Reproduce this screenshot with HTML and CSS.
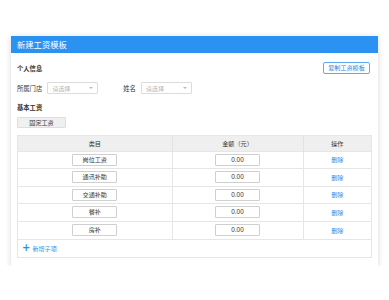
FILE: index.html
```html
<!DOCTYPE html>
<html lang="zh-CN">
<head>
<meta charset="utf-8">
<title>新建工资模板</title>
<link rel="stylesheet" href="styles.css">
</head>
<body>
<div class="card">
  <div class="card-head">新建工资模板</div>
  <div class="card-body">
    <div class="sec-row">
      <span class="sec-title">个人信息</span>
      <button class="btn-outline">复制工资模板</button>
    </div>
    <div class="form-row">
      <span class="label">所属门店</span>
      <div class="select"><span>请选择</span><i class="caret"></i></div>
      <span class="label label-gap">姓名</span>
      <div class="select"><span>请选择</span><i class="caret"></i></div>
    </div>
    <div class="sec-row sec-row2">
      <span class="sec-title">基本工资</span>
    </div>
    <button class="btn-grey">固定工资</button>
    <div class="table-wrap">
      <table class="grid">
        <colgroup><col class="c1"><col class="c2"><col class="c3"></colgroup>
        <thead>
          <tr><th>类目</th><th>金额（元）</th><th>操作</th></tr>
        </thead>
        <tbody>
          <tr><td><div class="box">岗位工资</div></td><td><div class="box num">0.00</div></td><td><a class="link">删除</a></td></tr>
          <tr><td><div class="box">通讯补助</div></td><td><div class="box num">0.00</div></td><td><a class="link">删除</a></td></tr>
          <tr><td><div class="box">交通补助</div></td><td><div class="box num">0.00</div></td><td><a class="link">删除</a></td></tr>
          <tr><td><div class="box">餐补</div></td><td><div class="box num">0.00</div></td><td><a class="link">删除</a></td></tr>
          <tr><td><div class="box">房补</div></td><td><div class="box num">0.00</div></td><td><a class="link">删除</a></td></tr>
        </tbody>
      </table>
      <div class="add-row"><span class="plus">+</span>新增子项</div>
    </div>
  </div>
</div>
</body>
</html>
```
FILE: styles.css
```css
* { box-sizing: border-box; }
html, body { margin: 0; padding: 0; background: #fff; }
body {
  font-family: "Noto Sans CJK SC", "Noto Sans", sans-serif;
  color: #333;
  font-size: 6.3px;
}
.card {
  margin: 36px 0 0 11px;
  width: 367px;
  background: #fff;
  box-shadow: 0 1px 6px rgba(0,0,0,0.16);
  padding-bottom: 8px;
}
.card-head {
  height: 17px;
  background: #2b92f2;
  color: #fff;
  font-size: 8.3px;
  line-height: 17px;
  padding-left: 6px;
}
.card-body { padding: 0 6px; }
.sec-row {
  display: flex;
  justify-content: space-between;
  align-items: center;
  height: 12px;
  margin-top: 9px;
  padding-right: 2px;
}
.sec-row2 { margin-top: 7px; }
.sec-title { font-weight: bold; color: #333; font-size: 6.3px; }
button { font-family: inherit; padding: 0; cursor: pointer; }
.btn-outline {
  width: 47px;
  height: 12px;
  border: 1px solid #5eaaf0;
  border-radius: 2px;
  background: #fff;
  color: #2b86d9;
  font-size: 6.1px;
  line-height: 10px;
}
.form-row {
  display: flex;
  align-items: center;
  margin-top: 8px;
  height: 12px;
}
.label { color: #333; font-size: 6.3px; margin-right: 5px; }
.label-gap { margin-left: 25px; }
.select {
  width: 51px;
  height: 12px;
  border: 1px solid #dcdcdc;
  border-radius: 1px;
  display: flex;
  align-items: center;
  justify-content: space-between;
  padding: 0 4px 0 4px;
  color: #b8b8b8;
  font-size: 6.1px;
}
.caret {
  width: 0; height: 0;
  border-left: 2px solid transparent;
  border-right: 2px solid transparent;
  border-top: 2.5px solid #bbb;
}
.btn-grey {
  display: block;
  margin-top: 4px;
  width: 49px;
  height: 11px;
  background: #f0f0f0;
  border: 1px solid #dedede;
  border-radius: 1px;
  color: #333;
  font-size: 6.1px;
  line-height: 9px;
}
.table-wrap {
  margin-top: 7px;
  border: 1px solid #e6e6e6;
}
.grid {
  width: 100%;
  border-collapse: collapse;
  table-layout: fixed;
}
.c1 { width: 154px; }
.c2 { width: 131px; }
.c3 { width: auto; }
.grid th {
  height: 15px;
  background: #efefef;
  font-weight: normal;
  color: #333;
  font-size: 6.1px;
  padding: 0;
  border-left: 1px solid #e2e2e2;
}
.grid td {
  height: 17.5px;
  padding: 0;
  text-align: center;
  border-top: 1px solid #e6e6e6;
  border-left: 1px solid #e6e6e6;
}
.grid th:first-child, .grid td:first-child { border-left: none; }
.box {
  margin: 0 auto;
  width: 45px;
  height: 12px;
  border: 1px solid #cfcfcf;
  border-radius: 1px;
  background: #fff;
  font-size: 6.1px;
  line-height: 10px;
  color: #333;
}
.num { font-family: "Liberation Sans", Arial, sans-serif; font-size: 6.4px; }
.link { color: #2b8fe8; font-size: 6.1px; }
.add-row {
  height: 18px;
  border-top: 1px solid #e6e6e6;
  display: flex;
  align-items: center;
  padding-left: 4px;
  color: #2b8fe8;
  font-size: 6.1px;
}
.plus {
  font-family: "DejaVu Sans", sans-serif;
  font-size: 10px;
  font-weight: bold;
  line-height: 10px;
  margin-right: 2px;
}
```
